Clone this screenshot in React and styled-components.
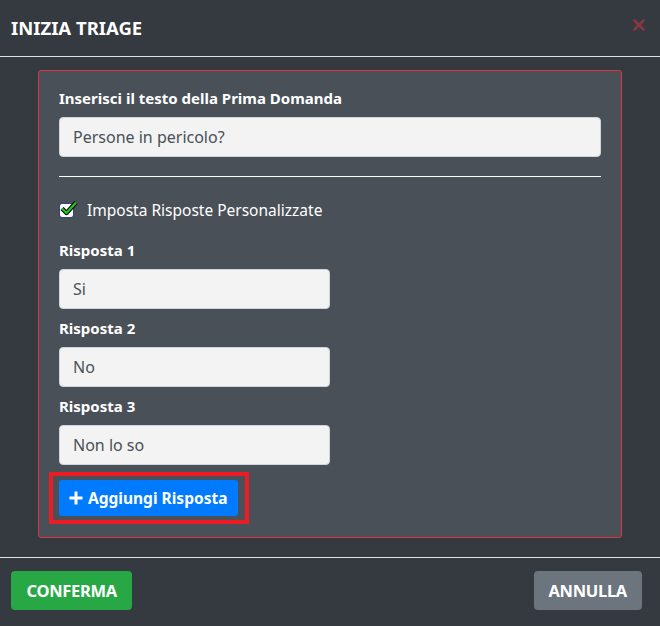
import React, {useState} from 'react';
import styled, {createGlobalStyle} from 'styled-components';

const GlobalStyle = createGlobalStyle`
    body {
        margin: 0;
        background: #343a40;
        font-family: "Noto Sans", "Open Sans", sans-serif;
    }
    * { box-sizing: border-box; }
`;

const Modal = styled.div`
    width: 660px;
    height: 626px;
    background: #343a40;
    color: #fff;
    display: flex;
    flex-direction: column;
`;

const Header = styled.div`
    height: 57px;
    padding: 0 15px 0 11px;
    display: flex;
    align-items: center;
    justify-content: space-between;
    border-bottom: 1px solid #dee2e6;
    h2 {
        margin: 0;
        font-size: 18.5px;
        font-weight: 700;
        padding-bottom: 2px;
    }
`;

const Close = styled.button`
    background: none;
    border: none;
    padding: 0;
    margin-top: -7px;
    opacity: 0.5;
    display: flex;
`;

const Body = styled.div`
    padding: 13px 38px 19px;
    border-bottom: 1px solid #dee2e6;
`;

const Card = styled.div`
    border: 1px solid #dc3545;
    border-radius: 3px;
    background: #495057;
    padding: 17px 20px 13px;
`;

const Label = styled.div`
    font-size: 15px;
    font-weight: 700;
    line-height: 20px;
    margin-top: ${p => p.$top || 0}px;
    margin-bottom: 9px;
`;

const Input = styled.input`
    display: block;
    width: ${p => p.$short ? '271px' : '100%'};
    height: 40px;
    background: #f3f3f3;
    border: 1px solid #ced4da;
    border-radius: 4px;
    padding: 0 13px;
    font-family: inherit;
    font-size: 16px;
    color: #495057;
    outline: none;
`;

const Rule = styled.hr`
    border: none;
    border-top: 1px solid #fff;
    margin: 19px 0 23px;
`;

const CheckRow = styled.label`
    display: flex;
    align-items: center;
    gap: 14px;
    font-size: 15.5px;
    line-height: 20px;
`;

const Box = styled.span`
    position: relative;
    width: 13px;
    height: 13px;
    margin-left: 1px;
    background: #fff;
    outline: 1px dotted #2233cc;
    border-radius: 2px;
    svg {
        position: absolute;
        left: 0;
        top: -5px;
    }
`;

const Highlight = styled.div`
    display: inline-block;
    margin-top: 7px;
    margin-left: -10px;
    border: 4px solid #ed1c24;
    padding: 4px 7px 4px 6px;
`;

const AddButton = styled.button`
    display: flex;
    align-items: center;
    gap: 5px;
    height: 36px;
    padding: 0 11px 0 10px;
    background: #007bff;
    border: none;
    border-radius: 3px;
    color: #fff;
    font-family: inherit;
    font-size: 15.5px;
    font-weight: 700;
`;

const Footer = styled.div`
    flex: 1;
    display: flex;
    justify-content: space-between;
    align-items: flex-start;
    padding: 13px 18px 0 11px;
`;

const ActionButton = styled.button`
    height: 39px;
    padding: 0 ${p => p.$pad}px;
    border: none;
    border-radius: 4px;
    background: ${p => p.$color};
    color: #fff;
    font-family: inherit;
    font-size: 16.5px;
    font-weight: 700;
    letter-spacing: -0.3px;
    text-transform: uppercase;
`;

const answers = ['Si', 'No', 'Non lo so'];

const App = () => {
    const [question, setQuestion] = useState('Persone in pericolo?');
    return (
        <>
            <GlobalStyle/>
            <Modal>
                <Header>
                    <h2>INIZIA TRIAGE</h2>
                    <Close>
                        <svg width="12" height="12" viewBox="0 0 12 12">
                            <path d="M1.5 1.5 L10.5 10.5 M10.5 1.5 L1.5 10.5" stroke="#dc3545" strokeWidth="2.6" strokeLinecap="round"/>
                        </svg>
                    </Close>
                </Header>
                <Body>
                    <Card>
                        <Label>Inserisci il testo della Prima Domanda</Label>
                        <Input value={question} onChange={e => setQuestion(e.target.value)}/>
                        <Rule/>
                        <CheckRow>
                            <Box>
                                <svg width="18" height="17" viewBox="0 0 18 17">
                                    <path d="M2 9.5 L6.5 14 L16 3.5" fill="none" stroke="#000" strokeWidth="4.4" strokeLinejoin="round"/>
                                    <path d="M2 9.5 L6.5 14 L16 3.5" fill="none" stroke="#22c322" strokeWidth="2.4" strokeLinejoin="round"/>
                                </svg>
                            </Box>
                            Imposta Risposte Personalizzate
                        </CheckRow>
                        {answers.map((a, i) => (
                            <div key={a}>
                                <Label $top={i === 0 ? 20 : 9}>Risposta {i + 1}</Label>
                                <Input $short defaultValue={a}/>
                            </div>
                        ))}
                        <Highlight>
                            <AddButton>
                                <svg width="14" height="14" viewBox="0 0 14 14">
                                    <path d="M7 0.5 V13.5 M0.5 7 H13.5" stroke="#fff" strokeWidth="3"/>
                                </svg>
                                Aggiungi Risposta
                            </AddButton>
                        </Highlight>
                    </Card>
                </Body>
                <Footer>
                    <ActionButton $color="#28a745" $pad={15.5}>Conferma</ActionButton>
                    <ActionButton $color="#6c757d" $pad={15}>Annulla</ActionButton>
                </Footer>
            </Modal>
        </>
    );
}

export default App;
